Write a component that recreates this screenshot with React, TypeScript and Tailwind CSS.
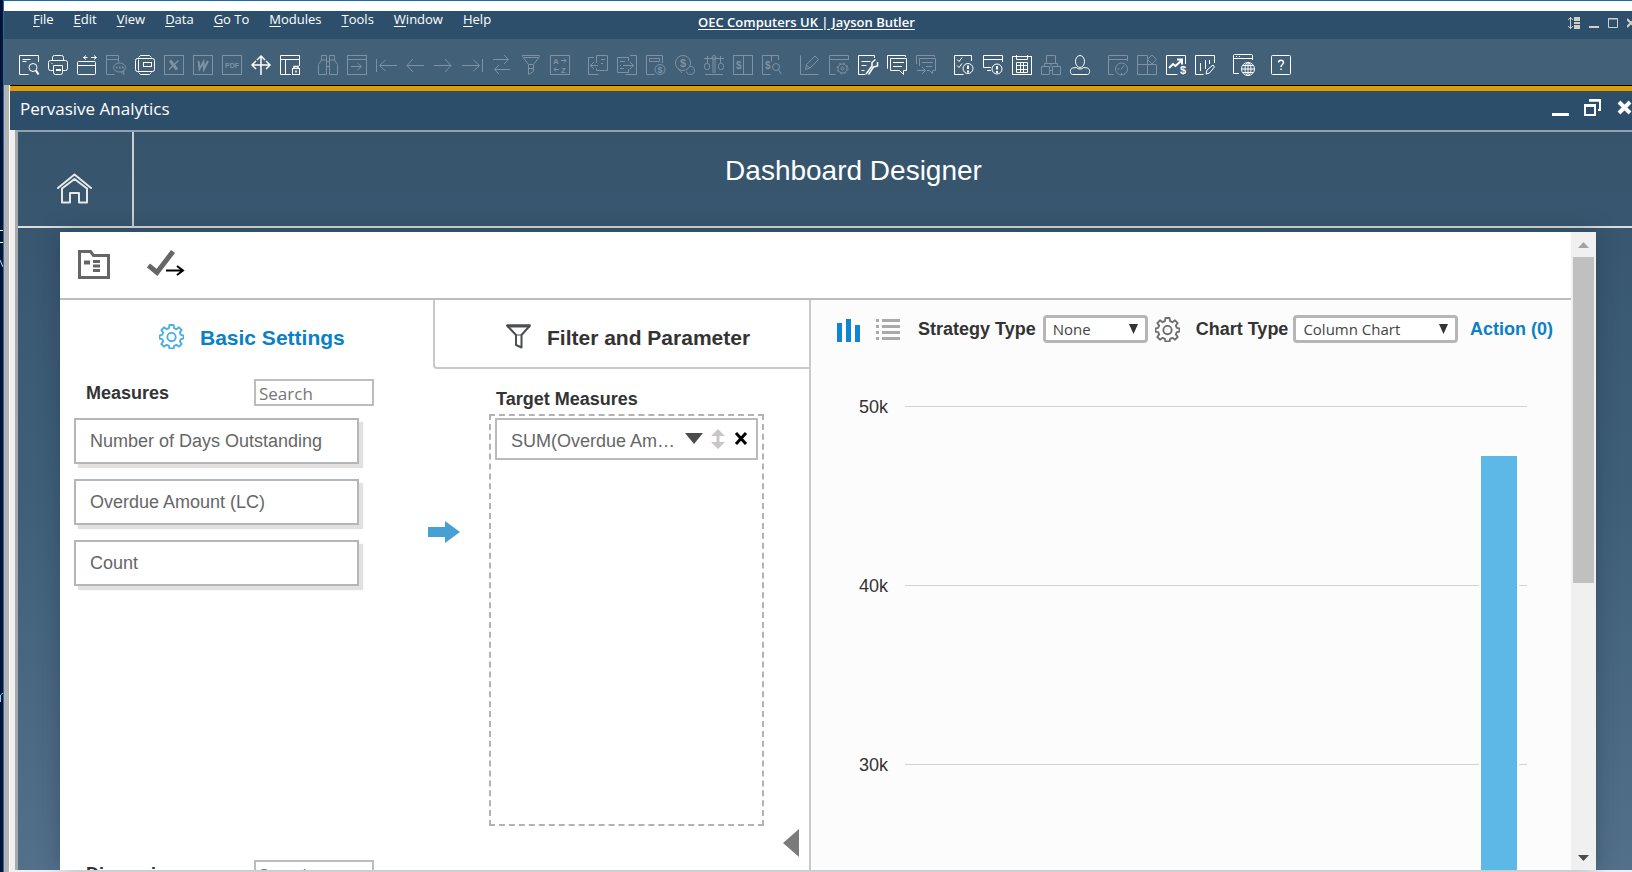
import React from 'react'
import clsx from 'clsx'

const menus = ['File', 'Edit', 'View', 'Data', 'Go To', 'Modules', 'Tools', 'Window', 'Help']

interface Tool {
  nom: string
  off?: boolean
  icon: React.ReactNode
}

const toolGroups: Tool[][] = [
  [
    {
      nom: 'Preview',
      icon: <><path d="M19.500 7V.5H.5v19h9M3.500 4.500h8M3.500 6.500h4" /><circle cx="14" cy="12.500" r="4" /><path d="M17 15.500l2.500 4" strokeWidth={2} /></>,
    },
    {
      nom: 'Print',
      icon: <><path d="M4.500 5.500V2.500a2 2 0 012-2h7a2 2 0 012 2v3M5 15.500H2.500a2 2 0 01-2-2v-6a2 2 0 012-2h15a2 2 0 012 2v6a2 2 0 01-2 2H15M3.500 8.500h1" /><path d="M5.500 10.500h9v7a2 2 0 01-2 2h-5a2 2 0 01-2-2z" /><path d="M8 15h5" strokeWidth={2} /></>,
    },
    {
      nom: 'Fit width',
      icon: <><rect x=".5" y="6.500" width="18" height="13" rx="1" /><path d="M.5 10.500h18M6.500 2.500h4M9 .5l-2.500 2 2.500 2M14 2.500h5M17 .5l2.500 2-2.500 2" /></>,
    },
    {
      nom: 'Message',
      off: true,
      icon: <><path d="M12.500 7V.5H.5v19h8M.5 4.500h12" /><ellipse cx="13.500" cy="12.500" rx="6" ry="4.500" /><path d="M15 17l3 2.500-.5-4.500" /><path d="M10 12.500h1.500M13 12.500h1.500M16 12.500h1.500" strokeWidth={2} /></>,
    },
    {
      nom: 'Frame',
      icon: <><path d="M3.500 2.500l2-2h9l2 2M3.500 17.500l2 2h9l2-2M3.500 4.500v11" /><rect x=".5" y="3.500" width="19" height="13" rx="2" /><rect x="8.500" y="7.500" width="8" height="4" /></>,
    },
    {
      nom: 'Excel',
      off: true,
      icon: <><rect x=".5" y=".5" width="19" height="19" /><path d="M6 5.500l7 9" strokeWidth={3} /><path d="M14.500 5.500L5 14.500" strokeWidth={1.5} /></>,
    },
    {
      nom: 'Word',
      off: true,
      icon: <><rect x=".5" y=".5" width="19" height="19" /><path d="M5.500 6l1 8 4-7 .5 7 4-8" strokeWidth={2} /></>,
    },
    {
      nom: 'PDF',
      off: true,
      icon: <><rect x=".5" y=".5" width="19" height="19" /><text x="10" y="12.500" textAnchor="middle" className="fill-current stroke-none font-['Liberation_Sans'] text-[7px] font-bold">PDF</text></>,
    },
    {
      nom: 'Move',
      icon: <path d="M10 1v19M1 10h18M6 5l4-4 4 4M5 6l-4 4 4 4M15 6l4 4-4 4" strokeWidth={1.5} />,
    },
    {
      nom: 'Lock layout',
      icon: <><path d="M11 19.500H.5V.5h19V11M.5 4.500h19M5.500 4.500v15" /><rect x="12.500" y="13.500" width="7" height="6" /><path d="M14 13.500v-2h4v2M16 15.500v2" strokeWidth={1.5} /></>,
    },
  ],
  [
    {
      nom: 'Find',
      off: true,
      icon: <><path d="M3.500 5V.5h5V5M11.500 5V.5h5V5M8.500 6.500h3M8.500 11.500h3" /><path d="M.5 19.500v-10l3-4.500h5v14.500zM11.500 19.500V5h5l3 4.500v10z" /></>,
    },
    {
      nom: 'Go to window',
      off: true,
      icon: <><rect x=".5" y=".5" width="19" height="19" /><path d="M.5 4.500h19M4 11.500h10M10.500 8l4 3.500-4 3.500" /></>,
    },
    { nom: 'First', off: true, icon: <path d="M.5 4v13M4 10.500h17M9.500 5l-6 5.500 6 5.500" /> },
    { nom: 'Previous', off: true, icon: <path d="M2 10.500h17M8 4l-6 6.500L8 17" /> },
    { nom: 'Next', off: true, icon: <path d="M0 10.500h17M11 4l6 6.500-6 6.500" /> },
    { nom: 'Last', off: true, icon: <path d="M19.500 4v13M-1 10.500h17M10.500 5l6 5.500-6 5.500" /> },
    { nom: 'Swap', off: true, icon: <path d="M1 4.500h15M12 0l4.500 4.500L12 9M3 14.500h15M7 10l-4.500 4.500L7 19" /> },
    {
      nom: 'Filter',
      off: true,
      icon: <path d="M1.500.5h17v1l-6 8v7l-5 3v-10l-6-8zM3 2.500h14M8 9.500h4M8 13.500h4" />,
    },
    {
      nom: 'Sort',
      off: true,
      icon: <><rect x=".5" y=".5" width="19" height="19" /><path d="M11 5.500h5M14 3.500l2 2-2 2M9 14.500H4M6 12.500l-2 2 2 2" /><text x="3" y="9" className="fill-current stroke-none font-['Liberation_Sans'] text-[8px] font-bold">A</text><text x="11" y="18" className="fill-current stroke-none font-['Liberation_Sans'] text-[8px] font-bold">Z</text></>,
    },
  ],
  [
    {
      nom: 'Base document',
      off: true,
      icon: <><path d="M6 2.500H.5v17h10M8.500 8V.5h11v15h-11v-2M2 10.500h8M6 7l-3.500 3.500L6 14M13 4.500h4M13 8.500h2" /></>,
    },
    {
      nom: 'Target document',
      off: true,
      icon: <><path d="M11.500 6V2.500H.5v15h11V14M13 .5h6.500v19h-11M6 10.500h10M13 7l3.500 3.500L13 14M3 6.500h5M3 10.500h1M3 13.500h4" /></>,
    },
    {
      nom: 'Gross profit',
      off: true,
      icon: <><path d="M16.500 8V.5H.5v19h8M3.500 3.500h10v3h-10z" /><circle cx="14" cy="14.500" r="5" /><text x="14" y="18" textAnchor="middle" className="fill-current stroke-none font-['Liberation_Sans'] text-[9px] font-bold">$</text></>,
    },
    {
      nom: 'Payment',
      off: true,
      icon: <><circle cx="8" cy="8" r="7.500" /><path d="M15 11.500a4 4 0 11-3.500 5M3 13l4 5" /><text x="8" y="12" textAnchor="middle" className="fill-current stroke-none font-['Liberation_Sans'] text-[11px] font-bold">$</text></>,
    },
    {
      nom: 'Balance',
      off: true,
      icon: <><path d="M0 3.500h8M12 3.500h8M3.500 1v7M16.500 1v7M9 2v16M11 2v16M1 19.500h18" /><rect x=".5" y="8.500" width="5" height="6" rx="2" /><rect x="14.500" y="8.500" width="5" height="6" rx="2" /><circle cx="10" cy="2.500" r="2" /></>,
    },
    {
      nom: 'Journal',
      off: true,
      icon: <><rect x=".5" y=".5" width="19" height="19" /><path d="M10.500.5v19" /><text x="3" y="14" className="fill-current stroke-none font-['Liberation_Sans'] text-[10px] font-bold">$</text></>,
    },
    {
      nom: 'Journal preview',
      off: true,
      icon: <><path d="M16.500 5V.5H.5v19h8M9.500.5v6" /><text x="3" y="14" className="fill-current stroke-none font-['Liberation_Sans'] text-[10px] font-bold">$</text><circle cx="14" cy="12" r="3.500" /><path d="M16 14.500l3.500 4.500" /></>,
    },
  ],
  [
    { nom: 'Edit form', off: true, icon: <path d="M.5.5v19h18M5.500 14.500l1-5L15 1l3.500 3.500L10 13zM6 10l4 3" /> },
    {
      nom: 'Form settings',
      off: true,
      icon: <><path d="M19.500 5V.5H.5v19h6M.5 4.500h19" /><circle cx="13.500" cy="13.500" r="4.500" /><circle cx="13.500" cy="13.500" r="1.500" /><circle cx="13.500" cy="13.500" r="5.500" strokeDasharray="2 2.300" /></>,
    },
    {
      nom: 'Customize',
      icon: <><path d="M16.500 3V.5H.5v19h7M3.500 6.500h9M3.500 10.500h5M3.500 15.500h3" /><path d="M17.500 4.500l-3.500 3v3.500l-6 8M19.500 7v4l-4 1-5 7.500" strokeWidth={1.5} /></>,
    },
    {
      nom: 'Messages',
      icon: <><path d="M1 13.500h-.5V.5h18V2" /><path d="M3.500 3.500h16v12h-3v4l-4-4h-9z" /><path d="M6 7.500h11M6 11.500h9" /></>,
    },
    {
      nom: 'Forward message',
      off: true,
      icon: <><path d="M.5 9V.5h18V2M3.500 11V3.500h16v12h-3v3l-3-3H11M6 7.500h11M10 11.500h6M1 15.500h8M6 12l3.500 3.500L6 19" /></>,
    },
  ],
  [
    {
      nom: 'Task alerts',
      icon: <><path d="M17.500 6V.5H.5v19h9M3 4.500l2 2 3-4M3 10.500l2 2 3-4" /><circle cx="14" cy="13.500" r="5" /><path d="M14 10.500v3.500M14 15.500v2" strokeWidth={2} /></>,
    },
    {
      nom: 'Window alerts',
      icon: <><path d="M19.500 7V.5H.5v12H8M.5 4.500h19M4 15.500h4" /><circle cx="14" cy="14" r="5" /><path d="M14 11v3.500M14 16v2" strokeWidth={2} /></>,
    },
    {
      nom: 'Calendar',
      icon: <><rect x=".5" y="1.500" width="19" height="18" /><path d="M4.500 0v4.500h11V0M4.500 7.500h11v10h-11zM8.500 7.500v10M11.500 7.500v10M4.500 10.500h11M4.500 14.500h11" /></>,
    },
    {
      nom: 'Organisation',
      off: true,
      icon: <path d="M5.500.5h9v8h-9zM.5 11.500h8v8h-8zM11.500 11.500h8v8h-8zM8.500 15.500h3M10 8.500v3M3.500 11V8.500h2M16.500 11V8.500h-2" />,
    },
    {
      nom: 'User',
      icon: <><ellipse cx="10" cy="6.500" rx="4.500" ry="6" /><path d="M6.500 12.500l-4 .5c-3 1-2.500 6.500 0 6.500h15c2.500 0 3-5.500 0-6.500l-4-.5c-1 2-6 2-7 0z" /></>,
    },
  ],
  [
    {
      nom: 'Schedule',
      off: true,
      icon: <><path d="M19.500 6V.5H.5v19h5M.5 4.500h19" /><circle cx="13.500" cy="14" r="6" /><path d="M13 14.500l3-4M9.500 14h2M13.500 18v2" /></>,
    },
    { nom: 'Widgets', off: true, icon: <path d="M10 .5H.5v19h19V10M.5 9.500h10M10.500.5v19M10.500 9.500h9M15 0l4.500 4.500L15 9l-4.500-4.500z" /> },
    {
      nom: 'Revenue',
      icon: <><path d="M19.500 9V.5H.5v19h11" /><path d="M3 13l4-4 2.500 2L16 5M11 4.500h5v5" strokeWidth={2} /><text x="14" y="19" className="fill-current stroke-none font-['Liberation_Sans'] text-[11px] font-bold">$</text></>,
    },
    {
      nom: 'Edit chart',
      icon: <path d="M19.500 8V.5H.5v19h8M5.500 8v8M10.500 5v9M14.500 5v4M11 19l1-4 6-5 1.500 2-5 6z" />,
    },
  ],
  [
    {
      nom: 'Browser',
      icon: <><path d="M19.500 5V.5a1 1 0 00-1-1h-17a1 1 0 00-1 1v18H6M.5 3.500h19M3 1.500h1M6 1.500h1" /><circle cx="15" cy="14" r="6.500" /><ellipse cx="15" cy="14" rx="3" ry="6.500" /><path d="M8.500 14h13M10 10.500h10M10 17.500h10M15 7.500v13" /></>,
    },
  ],
  [
    {
      nom: 'Help',
      icon: <><rect x=".5" y=".5" width="19" height="19" rx="1" /><path d="M7.500 7.500c0-3 5-3 5 0 0 2-2.500 2-2.500 4.500M10 13.500V15" strokeWidth={1.5} /></>,
    },
  ],
]

const measures = ['Number of Days Outstanding', 'Overdue Amount (LC)', 'Count']

const ticks = [50, 40, 30, 20, 10, 0]
const TICK_HEIGHT = 179
const overdue = 47.2

function Gear({ className }: { className?: string }) {
  return (
    <svg className={className} fill="none" stroke="currentColor" strokeWidth={1.8} strokeLinejoin="round" viewBox="0 0 24 24">
      <path d="M10 1h4l.5 3 2.200 1 2.500-1.800 2.600 2.600L20 8.300l1 2.200 2.500.5v3l-2.500.5-1 2.200 1.800 2.500-2.600 2.600-2.500-1.800-2.200 1-.5 2.500h-4l-.5-2.500-2.200-1-2.500 1.800-2.600-2.600L4 16.700l-1-2.200-2.500-.5v-3l2.500-.5 1-2.200-1.800-2.500 2.600-2.600L7.300 5l2.200-1z" />
      <circle cx="12" cy="12.500" r="4" />
    </svg>
  )
}

function SearchRow({ id, label }: { id: string; label: string }) {
  return (
    <div className="flex items-center justify-between h-[27px] pl-3 mr-[59px]">
      <label htmlFor={id} className="text-[18px] leading-5 font-bold text-[#333]">{label}</label>
      <input
        id={id}
        type="text"
        placeholder="Search"
        className="w-[120px] h-[27px] px-[3px] pt-px border-2 border-[#bdbdbd] bg-white font-['Open_Sans',sans-serif] text-[17px] text-[#666] placeholder:text-[#767676] outline-none"
      />
    </div>
  )
}

function SelectBox({ id, value, className }: { id: string; value: string; className: string }) {
  return (
    <div className={clsx('relative', className)}>
      <select
        id={id}
        defaultValue={value}
        className="block appearance-none w-full h-7 pl-[7px] border-[3px] border-[#b6b6b6] rounded-sm bg-white font-['Open_Sans',sans-serif] text-[15px] leading-5 font-normal text-[#444] outline-none"
      >
        <option>{value}</option>
      </select>
      <svg className="absolute right-[10px] top-[9px] w-[9px] h-[10px] pointer-events-none" viewBox="0 0 9 10">
        <path d="M0 0h9L4.500 10z" fill="#333" />
      </svg>
    </div>
  )
}

function MenuBar() {
  return (
    <div className="h-7 flex bg-[#2d4f6b] text-white font-['Open_Sans',sans-serif] text-[13px] leading-4 shrink-0">
      <nav className="w-[694px] shrink-0 pl-[29px] flex gap-5">
        {menus.map((nom) => (
          <button key={nom} className="h-4 whitespace-nowrap">
            <span className="underline underline-offset-2">{nom[0]}</span>{nom.slice(1)}
          </button>
        ))}
      </nav>
      <a href="#company" className="h-5 pt-[3px] text-[13px] font-semibold underline underline-offset-2 whitespace-nowrap">OEC Computers UK | Jayson Butler</a>
      {/* Contrôles de la fenêtre principale */}
      <div className="ml-auto flex gap-[9px] pt-[6px] text-[#d2cec8] overflow-hidden">
        <button aria-label="Arrange" className="w-3 h-3">
          <svg className="w-3 h-3" fill="none" stroke="currentColor" viewBox="0 0 12 12">
            <path d="M2.500 0v12M0 3l2.500-2.500L5 3M0 9l2.500 2.500L5 9" />
            <path d="M7 1h4v2H7zM6 6h6M7 9h4v2H7z" strokeWidth={2} />
          </svg>
        </button>
        <button aria-label="Minimize" className="w-[10px] h-3">
          <svg className="w-[10px] h-3" viewBox="0 0 10 12"><path d="M0 9h10v2H0z" fill="currentColor" /></svg>
        </button>
        <button aria-label="Maximize" className="w-[10px] h-3">
          <svg className="w-[10px] h-3" fill="none" stroke="currentColor" viewBox="0 0 10 12"><path d="M.5 1.500h9v9h-9zM0 2h10" /></svg>
        </button>
        <button aria-label="Close" className="w-[5px] h-3">
          <svg className="w-[5px] h-3" fill="none" stroke="currentColor" strokeWidth={2} viewBox="0 0 5 12"><path d="M0 2l8 8M0 10l8-8" /></svg>
        </button>
      </div>
    </div>
  )
}

function Toolbar() {
  return (
    <div className="h-[46px] pl-[15px] pt-4 flex gap-[18px] bg-[#426179] shrink-0">
      {toolGroups.map((group) => (
        <div key={group[0].nom} className="flex gap-[9px]">
          {group.map((tool) => (
            <button key={tool.nom} aria-label={tool.nom} className={clsx('w-5 h-5', tool.off ? 'text-[#7d92a4]' : 'text-white')}>
              <svg className="w-5 h-5 overflow-visible" fill="none" stroke="currentColor" viewBox="0 0 20 20">{tool.icon}</svg>
            </button>
          ))}
        </div>
      ))}
    </div>
  )
}

function TitleBar() {
  return (
    <div className="h-[39px] pl-[10px] pt-[6px] flex items-start justify-between bg-[#2d4e6b] text-white shrink-0">
      <h2 className="font-['Open_Sans',sans-serif] text-[17px] leading-6">Pervasive Analytics</h2>
      <div className="flex gap-[15px] h-[18px] mt-[2px]">
        <button aria-label="Minimize window" className="w-[17px] h-[18px]">
          <svg className="w-[17px] h-[18px]" viewBox="0 0 17 18"><path d="M0 14h17v3H0z" fill="currentColor" /></svg>
        </button>
        <button aria-label="Restore window" className="w-[17px] h-[18px]">
          <svg className="w-[17px] h-[18px]" fill="none" stroke="currentColor" strokeWidth={2} viewBox="0 0 17 18">
            <path d="M1 7h10v9H1zM0 6h12" />
            <path d="M5 1.500h11V11h-2" />
            <path d="M5 1h12" strokeWidth={3} />
          </svg>
        </button>
        <button aria-label="Close window" className="w-4 h-[18px]">
          <svg className="w-4 h-[18px]" fill="none" stroke="currentColor" strokeWidth={4} viewBox="0 0 16 18"><path d="M3 3l11 11M14 3L3 14" /></svg>
        </button>
      </div>
    </div>
  )
}

function SettingsPanel() {
  return (
    <section className="w-[751px] shrink-0 border-r-2 border-[#cbc8c9]">
      {/* Onglets */}
      <div className="flex h-[69px]">
        <button className="w-[373px] pl-[99px] pt-[3px] flex items-center gap-4 text-[21px] font-bold text-[#0a80c6]">
          <Gear className="w-[25px] h-[25px] text-[#49aee2]" />
          <span className="pt-1">Basic Settings</span>
        </button>
        <button className="flex-1 pl-[71px] pt-[5px] flex items-center gap-4 border-l-2 border-b-2 border-[#cbc8c9] rounded-bl-sm text-[21px] font-bold text-[#333]">
          <svg className="w-[25px] h-[25px]" fill="none" stroke="#4a4f50" strokeWidth={2} viewBox="0 0 25 25">
            <path d="M1 1.500h23L15.500 11v12.500L10 21V11z" strokeLinejoin="round" />
            <path d="M1 2h23" strokeWidth={3} />
            <path d="M9.500 11h6" strokeWidth={1} />
          </svg>
          <span className="pt-1 whitespace-nowrap">Filter and Parameter</span>
        </button>
      </div>

      <div className="flex">
        <div className="w-[373px] pl-[14px] pt-[10px]">
          <SearchRow id="search-measures" label="Measures" />
          <ul className="pt-3 h-[454px] space-y-[15px]">
            {measures.map((m) => (
              <li key={m} className="w-[285px] h-[46px] pl-[14px] flex items-center border-2 border-[#b4b6b8] bg-white shadow-[4px_4px_1px_#e3e1df] text-[18px] text-[#666]">
                {m}
              </li>
            ))}
          </ul>
          <SearchRow id="search-dimensions" label="Dimensions" />
        </div>

        <button aria-label="Add measure" className="w-8 h-[22px] mt-[152px] -ml-[5px] shrink-0">
          <svg className="w-8 h-[22px]" viewBox="0 0 32 22"><path d="M0 6h17V0l15 11-15 11v-6H0z" fill="#47a0d3" /></svg>
        </button>

        <div className="pl-[29px] pt-5">
          <h3 className="h-[25px] pl-[7px] text-[18px] leading-5 font-bold text-[#333]">Target Measures</h3>
          <div className="w-[275px] h-[412px] p-[2px] pl-1 border-2 border-dashed border-[#b3b3b3]">
            <div className="w-[263px] h-[42px] pl-[14px] pr-2 flex items-center border-2 border-[#bababa] bg-white">
              <span className="flex-1 whitespace-nowrap text-[18px] text-[#666] pt-1">SUM(Overdue Am…</span>
              <button aria-label="Aggregation" className="w-[18px] h-5">
                <svg className="w-[18px] h-5" viewBox="0 0 18 20"><path d="M0 4h18L9 15z" fill="#4b4b4b" /></svg>
              </button>
              <button aria-label="Reorder" className="w-4 h-5 ml-[7px]">
                <svg className="w-4 h-5" viewBox="0 0 16 20"><path d="M8 0l7 7h-5.500v6H15l-7 7-7-7h5.500V7H1z" fill="#c9c6c8" /></svg>
              </button>
              <button aria-label="Remove" className="w-[14px] h-5 ml-2">
                <svg className="w-[14px] h-5" fill="none" stroke="#000" strokeWidth={3} viewBox="0 0 14 20"><path d="M2 4l10 11M12 4L2 15" /></svg>
              </button>
            </div>
          </div>
        </div>

        <button aria-label="Collapse panel" className="w-4 h-[28px] mt-[460px] ml-[19px]">
          <svg className="w-4 h-[28px]" viewBox="0 0 16 28"><path d="M16 0v28L0 14z" fill="#7b7b7b" /></svg>
        </button>
      </div>
    </section>
  )
}

function ChartPanel() {
  return (
    <section className="flex-1 min-w-0 bg-[#fcfcfc]">
      <div className="flex items-center h-7 mt-[15px] pl-[26px] pr-[18px] text-[18px] leading-5 font-bold text-[#333] whitespace-nowrap">
        <button aria-label="Chart view" className="w-6 h-6 mt-1">
          <svg className="w-6 h-6" viewBox="0 0 24 24"><path d="M0 4h5v19H0zM9 0h5v23H9zM18 6h5v17h-5z" fill="#0f86d0" /></svg>
        </button>
        <button aria-label="List view" className="w-6 h-6 ml-[15px] mt-1">
          <svg className="w-6 h-6" stroke="#a9a9a9" strokeWidth={3} viewBox="0 0 24 24">
            <path d="M0 1.500h3M6 1.500h18M0 7.500h3M6 7.500h18M0 13.500h3M6 13.500h18M0 19.500h3M6 19.500h18" />
          </svg>
        </button>
        <label htmlFor="strategy" className="ml-[18px]">Strategy Type</label>
        <SelectBox id="strategy" value="None" className="w-[105px] ml-[7px] shrink-0" />
        <button aria-label="Strategy settings" className="ml-[7px]"><Gear className="w-[25px] h-[25px] text-[#6e6e6e]" /></button>
        <label htmlFor="chart-type" className="ml-4">Chart Type</label>
        <SelectBox id="chart-type" value="Column Chart" className="w-[165px] ml-[5px] shrink-0" />
        <a href="#action" className="ml-auto text-[#0a80c6]">Action (0)</a>
      </div>

      <div className="relative mt-[53px] pl-12 pr-11">
        {ticks.map((t) => (
          <div key={t} className="h-[179px] flex gap-[17px]">
            <span className="w-[29px] text-right text-[18px] leading-[22px] text-[#333]">{t ? `${t}k` : 0}</span>
            <div className="flex-1 h-px mt-[10px] bg-[#d2d2d2]" />
          </div>
        ))}
        <div
          className="absolute bottom-0 right-[54px] w-9 bg-[#5cb8e6] ring-2 ring-white"
          style={{ top: 10 + ((50 - overdue) * TICK_HEIGHT) / 10 }}
        />
      </div>
    </section>
  )
}

function Scrollbar() {
  return (
    <div className="w-[25px] shrink-0 px-[2px] py-[9px] flex flex-col bg-[#f0f0f0]">
      <svg className="w-[11px] h-[6px] mx-auto mb-[9px] mt-px shrink-0" viewBox="0 0 11 6"><path d="M5.500 0L11 6H0z" fill="#a5a29f" /></svg>
      <div className="h-[326px] bg-[#c0c0c0]" />
      <svg className="w-[11px] h-[6px] mx-auto mt-auto shrink-0" viewBox="0 0 11 6"><path d="M0 0h11L5.500 6z" fill="#4b4b4b" /></svg>
    </div>
  )
}

export default function App() {
  return (
    <div className="h-screen flex overflow-hidden font-['Liberation_Sans',Arial,sans-serif]">
      {/* Bord du bureau */}
      <div className="w-[3px] shrink-0 bg-[#001433] pt-[230px]">
        <div className="h-[13px] border-y border-white" />
        <svg className="w-[3px] h-[10px] mt-[15px]" fill="none" stroke="#cfe4f5" viewBox="0 0 3 10"><path d="M0 2l3 7" /></svg>
        <svg className="w-[3px] h-[10px] mt-[424px]" fill="none" stroke="#8fd0ff" viewBox="0 0 3 10"><path d="M.5 10V3l2.500-2" /></svg>
      </div>
      <div className="w-px shrink-0 bg-[#1a6fb0]" />

      <div className="flex-1 min-w-0 flex flex-col">
        <div className="h-[11px] border-t border-[#1a6aa8] bg-white shrink-0" />
        <MenuBar />
        <Toolbar />

        <div className="flex-1 min-h-0 flex">
          <div className="w-[6px] shrink-0 bg-[#b3b3b3] border-r border-white" />
          <div className="flex-1 min-w-0 flex flex-col">
            <div className="h-[6px] border-t border-black bg-[#e09c00] shrink-0" />
            <TitleBar />

            <div className="flex-1 min-h-0 flex bg-[#f0f0f0] pl-[5px] pb-[2px]">
              <div className="flex-1 min-w-0 flex flex-col border-l-[3px] border-[#a8a8a8] bg-linear-to-b from-[#36546c] via-[#3f5f79] to-[#53708a]">
                <header className="h-[98px] flex border-y-2 border-t-[#8fa2b0] border-b-[#dcdcda] text-white shrink-0">
                  <a href="#home" aria-label="Home" className="w-[116px] pt-[41px] pl-[39px] border-r-2 border-[#cfcccc]">
                    <svg className="w-[35px] h-[31px]" fill="none" stroke="#e8e8e8" strokeWidth={2} strokeLinejoin="round" strokeLinecap="round" viewBox="0 0 35 31">
                      <path d="M1 15L17.500 1.500 34 15" />
                      <path d="M5 15.500L17.500 6 30 15.500V29.500h-8V20h-9v9.500H5z" />
                    </svg>
                  </a>
                  <h1 className="flex-1 pr-[59px] pt-[23px] text-center text-[28px] leading-8">Dashboard Designer</h1>
                </header>

                <main className="flex-1 min-h-0 flex mt-1 ml-[42px] mr-9 bg-white shadow-[0_0_20px_rgba(20,40,60,0.35)]">
                  <div className="flex-1 min-w-0 flex flex-col">
                    <div className="h-[68px] flex items-start gap-[37px] pl-[18px] pt-[18px] border-b-2 border-[#bdbdbd] shrink-0">
                      <button aria-label="Open" className="w-8 h-[29px]">
                        <svg className="w-8 h-[29px]" fill="none" stroke="#666" strokeWidth={3} viewBox="0 0 32 29">
                          <path d="M1.500 27.500V1.500h11l3 4h15v22z" />
                          <path d="M6 12.500h6" strokeWidth={4} />
                          <path d="M15 11.500h7M15 16h7M15 20.500h7" strokeWidth={3} />
                        </svg>
                      </button>
                      <button aria-label="Apply" className="w-[38px] h-[27px]">
                        <svg className="w-[38px] h-[27px]" fill="none" viewBox="0 0 38 27">
                          <path d="M1.500 15.500l8.500 7L26 1.500" stroke="#666" strokeWidth={5} />
                          <path d="M19 20.500h16M30 16l6 4.500-6 4.500" stroke="#000" strokeWidth={2} />
                        </svg>
                      </button>
                    </div>
                    <div className="flex-1 min-h-0 flex overflow-hidden">
                      <SettingsPanel />
                      <ChartPanel />
                    </div>
                  </div>
                  <Scrollbar />
                </main>
              </div>
            </div>
          </div>
        </div>
      </div>
    </div>
  )
}
